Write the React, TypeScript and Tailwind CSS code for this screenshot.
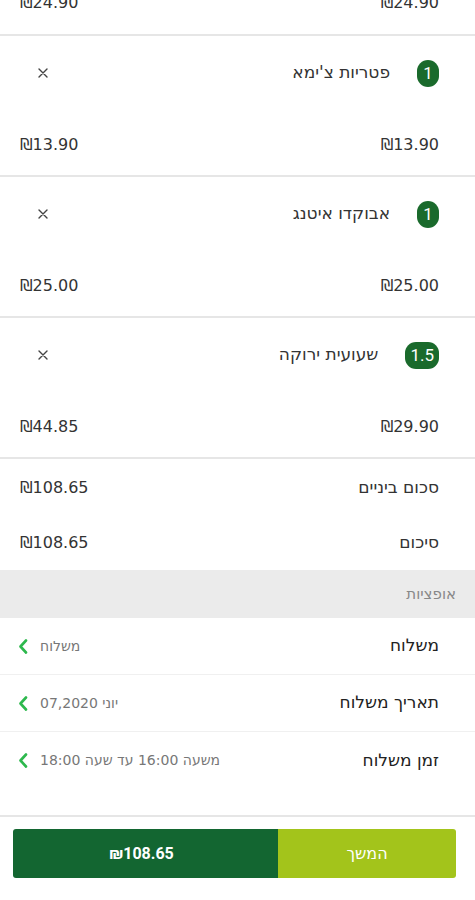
import React from "react";

const font = { fontFamily: '"DejaVu Sans", "Liberation Sans", sans-serif' };

function Price({ children }: { children: React.ReactNode }) {
  return (
    <span dir="ltr" className="text-[16px] leading-[20px] text-[#333]" style={{ fontFamily: '"DejaVu Sans", sans-serif' }}>
      {children}
    </span>
  );
}

function XIcon() {
  return (
    <svg width="10" height="10" viewBox="0 0 10 10" className="block">
      <path d="M1 1 L9 9 M9 1 L1 9" stroke="#444" strokeWidth="1.4" strokeLinecap="round" />
    </svg>
  );
}

function Chevron() {
  return (
    <svg width="10" height="15" viewBox="0 0 10 15" className="block">
      <path d="M8 1.5 L2.5 7.5 L8 13.5" stroke="#2db84d" strokeWidth="2.6" fill="none" strokeLinecap="round" strokeLinejoin="round" />
    </svg>
  );
}

function Item({ qty, name, unit, total }: { qty: string; name: string; unit: string; total: string }) {
  return (
    <div className="h-[141px] border-b-2 border-[#e6e6e6] pr-[36px] pl-[20px] flex flex-col">
      <div className="mt-[23px] h-[28px] flex items-center justify-between">
        <div className="flex items-center gap-[27px]">
          <span className="h-[27px] min-w-[22px] px-[5px] rounded-[11px] bg-[#1a6a2c] text-white text-[17px] leading-[27px] flex items-center justify-center" dir="ltr" style={{ fontFamily: '"Roboto", sans-serif' }}>
            {qty}
          </span>
          <span className="text-[17px] text-[#333]">{name}</span>
        </div>
        <div className="ml-[18px]">
          <XIcon />
        </div>
      </div>
      <div className="mt-[48px] flex items-center justify-between">
        <Price>{unit}</Price>
        <Price>{total}</Price>
      </div>
    </div>
  );
}

function OptionRow({ label, value, border }: { label: string; value: string; border?: boolean }) {
  return (
    <div className={`h-[57px] flex items-center justify-between pr-[36px] pl-[18px] ${border ? "border-b border-[#f0f0f0]" : ""}`}>
      <span className="text-[17px] text-[#222]">{label}</span>
      <div className="flex items-center gap-[12px]">
        <span className="text-[14px] text-[#777]">{value}</span>
        <Chevron />
      </div>
    </div>
  );
}

export default function App() {
  return (
    <div dir="rtl" className="w-[475px] h-[900px] bg-white overflow-hidden" style={font}>
      <div className="h-[36px] border-b-2 border-[#e6e6e6] pr-[36px] pl-[20px] flex flex-col">
        <div className="-mt-[7px] flex items-center justify-between">
          <Price>₪24.90</Price>
          <Price>₪24.90</Price>
        </div>
      </div>
      <Item qty="1" name="פטריות צ'ימא" unit="₪13.90" total="₪13.90" />
      <Item qty="1" name="אבוקדו איטנג" unit="₪25.00" total="₪25.00" />
      <Item qty="1.5" name="שעועית ירוקה" unit="₪29.90" total="₪44.85" />
      <div className="h-[57px] flex items-center justify-between pr-[36px] pl-[20px]">
        <span className="text-[17px] text-[#333]">סכום ביניים</span>
        <Price>₪108.65</Price>
      </div>
      <div className="h-[54px] flex items-center justify-between pr-[36px] pl-[20px]">
        <span className="text-[17px] text-[#333]">סיכום</span>
        <Price>₪108.65</Price>
      </div>
      <div className="h-[48px] bg-[#ebebeb] flex items-center pr-[19px]">
        <span className="text-[15px] text-[#888]">אופציות</span>
      </div>
      <OptionRow label="משלוח" value="משלוח" border />
      <OptionRow label="תאריך משלוח" value="יוני 07,2020" border />
      <OptionRow label="זמן משלוח" value="משעה 16:00 עד שעה 18:00" />
      <div className="h-[26px]" />
      <div className="border-t-2 border-[#e6e6e6] pt-[12px] px-[19px] pl-[13px]">
        <div className="h-[49px] rounded-[3px] overflow-hidden flex">
          <div className="w-[178px] bg-[#a3c41b] flex items-center justify-center text-white text-[16px]">המשך</div>
          <div className="flex-1 bg-[#136631] flex items-center justify-center text-white text-[16px] font-bold pr-[8px]" dir="ltr" style={{ fontFamily: '"Roboto", sans-serif' }}>
            ₪108.65
          </div>
        </div>
      </div>
    </div>
  );
}
